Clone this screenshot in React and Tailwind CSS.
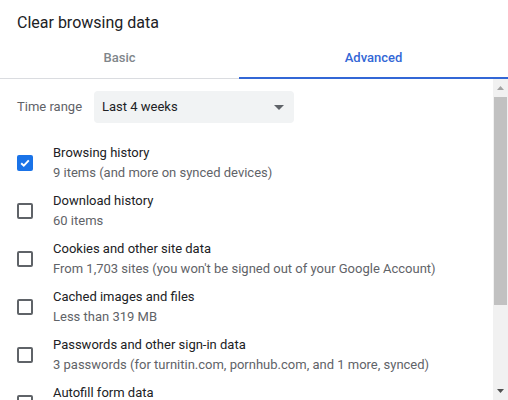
import React from "react";

const rows = [
  { title: "Browsing history", sub: "9 items (and more on synced devices)", checked: true },
  { title: "Download history", sub: "60 items" },
  { title: "Cookies and other site data", sub: "From 1,703 sites (you won't be signed out of your Google Account)" },
  { title: "Cached images and files", sub: "Less than 319 MB" },
  { title: "Passwords and other sign-in data", sub: "3 passwords (for turnitin.com, pornhub.com, and 1 more, synced)" },
  { title: "Autofill form data", sub: "" },
];

function Checkbox({ checked }) {
  if (checked) {
    return (
      <div className="w-4 h-4 rounded-[2px] bg-[#1a73e8] flex items-center justify-center shrink-0">
        <svg width="12" height="12" viewBox="0 0 12 12">
          <path d="M2.2 6.2 L4.8 8.7 L9.8 3.4" fill="none" stroke="white" strokeWidth="1.9" />
        </svg>
      </div>
    );
  }
  return <div className="w-4 h-4 rounded-[2px] border-2 border-[#5f6368] shrink-0" />;
}

export default function App() {
  return (
    <div
      className="w-[508px] h-[400px] overflow-hidden bg-white flex flex-col"
      style={{ fontFamily: "Roboto, 'Liberation Sans', sans-serif" }}
    >
      <div className="px-[17px] pt-[13px] h-[39px] text-[16px] leading-[20px] text-[#202124]">
        Clear browsing data
      </div>
      <div className="flex h-[40px] border-b border-[#dadce0]">
        <div className="w-[239px] flex items-center justify-center text-[13px] font-medium text-[#80868b] pb-[1px]">
          Basic
        </div>
        <div className="flex-1 flex items-center justify-center text-[13px] font-medium text-[#3367d6] border-b-2 border-[#3367d6] mb-[-1px]">
          Advanced
        </div>
      </div>
      <div className="flex flex-1 min-h-0">
        <div className="flex-1 min-w-0">
          <div className="flex items-center pt-3 pb-4 pl-[17px]">
            <div className="w-[77px] text-[13px] leading-[20px] text-[#5f6368]">Time range</div>
            <div className="w-[200px] h-8 rounded-[4px] bg-[#f1f3f4] flex items-center pl-2 pr-[8px] text-[13px] text-[#202124]">
              <span className="flex-1">Last 4 weeks</span>
              <svg width="10" height="5" viewBox="0 0 10 5" className="mr-[2px]">
                <path d="M0 0 L10 0 L5 5 Z" fill="#5f6368" />
              </svg>
            </div>
          </div>
          {rows.map((r, i) => (
            <div key={i} className="flex items-center py-1 pl-[17px]">
              <Checkbox checked={r.checked} />
              <div className="ml-5 text-[13px] leading-[20px]">
                <div className="text-[#202124]">{r.title}</div>
                <div className="text-[#5f6368] whitespace-nowrap h-[20px]">{r.sub}</div>
              </div>
            </div>
          ))}
        </div>
        <div className="w-[15px] bg-[#f1f1f1] flex flex-col items-stretch">
          <div className="h-[17px] flex items-center justify-center">
            <svg width="7" height="4" viewBox="0 0 7 4">
              <path d="M0 4 L7 4 L3.5 0 Z" fill="#a3a3a3" />
            </svg>
          </div>
          <div className="h-[208px] mx-[1px] mt-[1px] bg-[#c1c1c1]" />
          <div className="flex-1" />
          <div className="h-[17px] flex items-center justify-center pb-[2px]">
            <svg width="7" height="4" viewBox="0 0 7 4">
              <path d="M0 0 L7 0 L3.5 4 Z" fill="#505050" />
            </svg>
          </div>
        </div>
      </div>
    </div>
  );
}
